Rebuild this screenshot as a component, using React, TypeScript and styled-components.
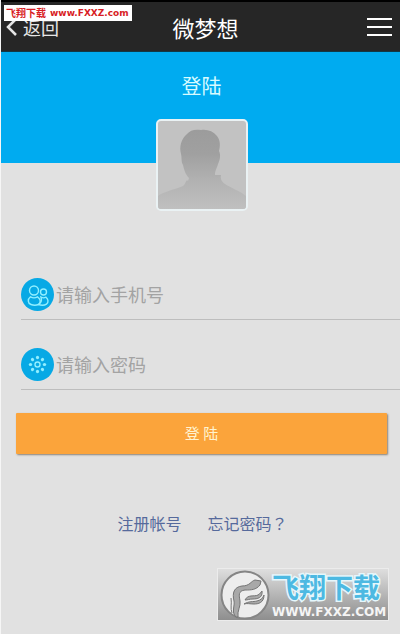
import React from "react";
import styled, { createGlobalStyle } from "styled-components";

const GlobalStyle = createGlobalStyle`
  * { box-sizing: border-box; }
  body {
    margin: 0;
    background: #e1e1e1;
    font-family: "Noto Sans CJK SC", "Noto Sans", sans-serif;
  }
`;

const Page = styled.div`
  position: relative;
  min-height: 100vh;
  border-left: 1px solid #f6f6f6;
  background: #e1e1e1;
`;

const Header = styled.header`
  display: grid;
  grid-template-columns: 1fr auto 1fr;
  align-items: center;
  height: 52px;
  padding: 0 8px 0 4px;
  border-top: 2px solid #000;
  border-bottom: 1px solid #123846;
  background: #262626;
  color: #fff;
`;

const BackLink = styled.a`
  display: flex;
  align-items: center;
  justify-self: start;
  gap: 6px;
  color: #e6e6e6;
  font-size: 18px;
  line-height: 24px;
  text-decoration: none;
`;

const Title = styled.h1`
  margin: 0;
  padding-left: 14px;
  font-size: 22px;
  line-height: 32px;
  font-weight: 400;
`;

const MenuButton = styled.button`
  display: flex;
  justify-self: end;
  padding: 0;
  border: 0;
  background: none;
  color: #fff;
`;

const Banner = styled.section`
  display: flex;
  flex-direction: column;
  align-items: center;
  height: 111px;
  padding: 19px 0 0 2px;
  background: #00abf0;
`;

const BannerTitle = styled.h2`
  margin: 0 0 18px;
  color: #d8fbff;
  font-size: 20px;
  line-height: 30px;
  font-weight: 400;
`;

const Avatar = styled.div`
  flex: none;
  width: 92px;
  height: 92px;
  overflow: hidden;
  border: 2px solid #eaf2f4;
  border-radius: 5px;
  background: #c2c2c2;

  svg { display: block; width: 100%; height: 100%; }
`;

const Form = styled.form`
  display: flex;
  flex-direction: column;
  padding-top: 87px;
`;

const Field = styled.label`
  display: flex;
  align-items: center;
  gap: 2px;
  height: 70px;
  margin-left: 20px;
  padding-top: 20px;
  border-bottom: 1px solid #bdbdbd;

  svg { flex: none; }
`;

const Input = styled.input`
  flex: 1;
  min-width: 0;
  height: 32px;
  padding: 0 0 2px;
  border: 0;
  outline: 0;
  background: none;
  color: #555;
  font: inherit;
  font-size: 18px;

  &::placeholder { color: #a3a3a3; opacity: 1; }
`;

const SubmitButton = styled.button`
  height: 41px;
  margin: 23px 13px 0 15px;
  padding: 0 0 2px;
  border: 0;
  border-radius: 1px;
  background: #fba43b;
  box-shadow: 1px 1px 2px #8b8175;
  color: #fff3cf;
  font: inherit;
  font-size: 15px;
  line-height: 22px;
`;

const Links = styled.nav`
  display: flex;
  justify-content: center;
  gap: 26px;
  padding: 57px 0 0 4px;
`;

const TextLink = styled.a`
  color: #566a9c;
  font-size: 16px;
  line-height: 24px;
  text-decoration: none;
`;

const QuestionMark = styled.span`
  font-family: "Noto Sans CJK TC", sans-serif;
`;

const TopMark = styled.div`
  position: absolute;
  top: 5px;
  left: 3px;
  display: flex;
  align-items: center;
  gap: 4px;
  width: 128px;
  height: 16px;
  padding: 0 2px;
  background: #fff;
  color: #d81c24;
  font-size: 10px;
  line-height: 16px;
  font-weight: 700;
  white-space: nowrap;
`;

const TopMarkSite = styled.span`
  font-family: "DejaVu Sans", sans-serif;
  font-size: 9px;
`;

const BottomMark = styled.div`
  position: absolute;
  right: 11px;
  bottom: 13px;
  display: flex;
  align-items: center;
  gap: 2px;
  width: 172px;
  height: 53px;
  padding-left: 2px;
  border: 1px solid #ececec;
  background: linear-gradient(#dedede, #8e8e8e);

  svg { flex: none; }
`;

const MarkText = styled.div`
  display: flex;
  flex-direction: column;
  font-weight: 700;
  white-space: nowrap;
`;

const MarkName = styled.span`
  color: #4db9e2;
  font-size: 27px;
  line-height: 34px;
  -webkit-text-stroke: 3px #e6f7fc;
  paint-order: stroke fill;
`;

const MarkSite = styled.span`
  color: #f5f5f5;
  font-family: "DejaVu Sans", sans-serif;
  font-size: 12px;
  line-height: 16px;
`;

const ChevronIcon = () => (
  <svg width="12" height="20" viewBox="0 0 12 20" fill="none" stroke="currentColor" strokeWidth="2.5" aria-hidden="true">
    <path d="M11 2 3 10l8 8" />
  </svg>
);

const MenuIcon = () => (
  <svg width="25" height="20" viewBox="0 0 25 20" fill="none" stroke="currentColor" strokeWidth="2" aria-hidden="true">
    <path d="M0 2h25M0 10h25M0 18h25" />
  </svg>
);

const PersonSilhouette = () => (
  <svg viewBox="0 0 88 88" role="img" aria-label="头像">
    <defs>
      <linearGradient id="person" x1="0" y1="0" x2="0" y2="1">
        <stop offset="0" stopColor="#9c9c9c" />
        <stop offset="0.3" stopColor="#a0a0a0" />
        <stop offset="0.65" stopColor="#b2b2b2" />
        <stop offset="1" stopColor="#c0c0c0" />
      </linearGradient>
    </defs>
    <path
      fill="url(#person)"
      d="M0 75C5 71 15 69 25 65C28 63 28 57 30 60L31 57C27 53 26 48 25 44C23 41 24 37 23 33C21 26 23 18 29 13C32 9 37 8 43 9C49 8 55 10 59 15C63 20 62 26 61 30C63 34 62 39 60 43C59 47 57 49 57 54L63 54C62 58 64 61 67 63C73 67 82 70 88 75V88H0Z"
    />
  </svg>
);

const UsersIcon = () => (
  <svg width="33" height="33" viewBox="0 0 33 33" fill="none" stroke="#91efff" strokeWidth="1.4" aria-hidden="true">
    <circle cx="16.5" cy="16.5" r="16.5" fill="#07a9e5" stroke="none" />
    <circle cx="13" cy="12.5" r="4.500" />
    <circle cx="22.5" cy="14" r="3" />
    <path d="M9.500 18.800c-3.200 2.500-2.800 6.500.500 7.700 2.200.8 5.300.8 7.500 0 2.800-2 2-5.700-1-7.700-2 1.200-5 1.200-7 0Z" />
    <path d="M20 19.200c1.500.8 3.500.8 5 0 2.300 1.800 2.800 5.500.500 6.900-2 1.200-5.500 1.200-8 .400 2.800-1.700 3.300-4.500 2.500-7.300Z" />
  </svg>
);

const petals = Array.from({ length: 8 }, (_, i) => i * 45);

const PasswordIcon = () => (
  <svg width="33" height="33" viewBox="0 0 33 33" aria-hidden="true">
    <circle cx="16.5" cy="16.5" r="16.5" fill="#07a9e5" />
    <circle cx="16.5" cy="16.5" r="2.5" fill="none" stroke="#91efff" strokeWidth="1.4" />
    {petals.map((angle) => (
      <ellipse key={angle} cx="16.5" cy="9.500" rx="1.600" ry="1.700" fill="#91efff" transform={`rotate(${angle} 16.5 16.5)`} />
    ))}
  </svg>
);

const FeixiangLogo = () => (
  <svg width="50" height="50" viewBox="0 0 50 50" aria-hidden="true">
    <circle cx="25" cy="25" r="23.5" fill="#ededed" stroke="#858585" strokeWidth="2" />
    <g fill="#a8a8a8" stroke="#747474" strokeWidth="1" strokeLinejoin="round">
      <path d="M16 47C11 42 15 36 14 31C12 23 14 17 22 16C30 16 31 11 35 10L41 11L40 15C36 20 31 20 25 20C18 21 19 25 20 31C21 36 17 41 18 47Z" />
      <path d="M12 43C10 38 12 34 11 28" fill="none" />
      <path d="M25 30C28 24 34 27 38 25C40 24 41 22 42 21C43 28 37 29 33 29C29 29 28 30 25 30Z" />
      <path d="M24 34C29 31 33 32 37 31C41 30 43 28 44 25C44 33 38 34 34 34C30 34 27 33 24 34Z" />
    </g>
  </svg>
);

export default function App() {
  return (
    <>
      <GlobalStyle />
      <Page>
        <Header>
          <BackLink href="#back">
            <ChevronIcon />
            返回
          </BackLink>
          <Title>微梦想</Title>
          <MenuButton type="button" aria-label="菜单">
            <MenuIcon />
          </MenuButton>
        </Header>
        <main>
          <Banner>
            <BannerTitle>登陆</BannerTitle>
            <Avatar>
              <PersonSilhouette />
            </Avatar>
          </Banner>
          <Form onSubmit={(event: React.FormEvent) => event.preventDefault()}>
            <Field>
              <UsersIcon />
              <Input type="tel" placeholder="请输入手机号" aria-label="手机号" />
            </Field>
            <Field>
              <PasswordIcon />
              <Input type="password" placeholder="请输入密码" aria-label="密码" />
            </Field>
            <SubmitButton type="submit">登 陆</SubmitButton>
          </Form>
          <Links>
            <TextLink href="#register">注册帐号</TextLink>
            <TextLink href="#forgot">
              忘记密码<QuestionMark>？</QuestionMark>
            </TextLink>
          </Links>
        </main>
        <TopMark>
          <span>飞翔下载</span>
          <TopMarkSite>www.FXXZ.com</TopMarkSite>
        </TopMark>
        <BottomMark>
          <FeixiangLogo />
          <MarkText>
            <MarkName>飞翔下载</MarkName>
            <MarkSite>WWW.FXXZ.COM</MarkSite>
          </MarkText>
        </BottomMark>
      </Page>
    </>
  );
}
